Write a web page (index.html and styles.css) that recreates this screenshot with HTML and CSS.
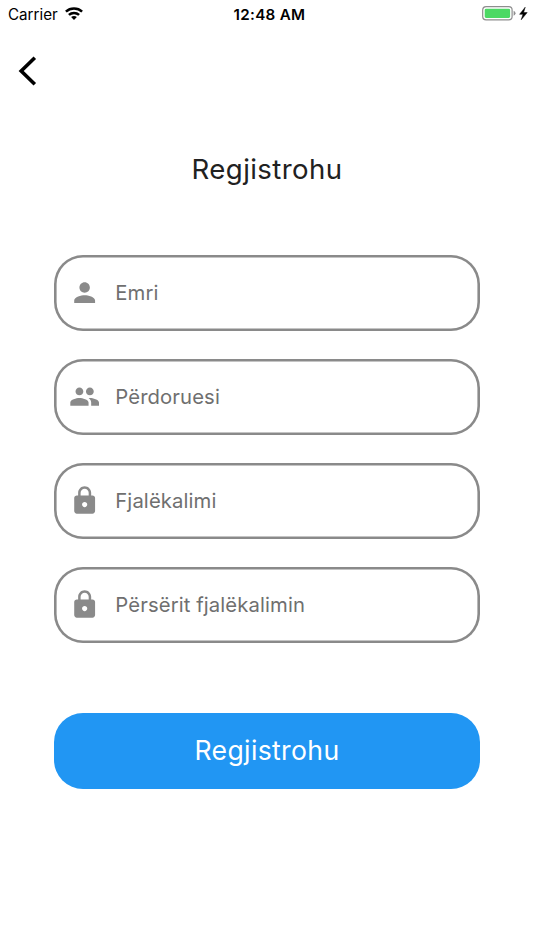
FILE: index.html
```html
<!DOCTYPE html>
<html lang="sq">
<head>
<meta charset="utf-8">
<title>Regjistrohu</title>
<link rel="stylesheet" href="styles.css">
</head>
<body>
<header class="status">
  <div class="carrier"><span class="carrier-name">Carrier</span>
    <svg class="wifi" viewBox="0 0 18 13"><g fill="none" stroke="#000" stroke-width="2.5"><path d="M.9 4.6C5.4.4 12.6.4 17.1 4.6"/><path d="M3.9 7.9C6.8 5.2 11.2 5.2 14.1 7.9"/></g><path d="M6.1 10.1C7.8 8.6 10.2 8.6 11.9 10.1L9 13z"/></svg>
  </div>
  <time class="clock">12:48 AM</time>
  <svg class="battery" viewBox="0 0 48 16"><rect x=".7" y=".7" width="29.4" height="13.2" rx="3.4" fill="#fff" stroke="#8e8e8e" stroke-width="1.2"/><rect x="2.7" y="2.7" width="25.4" height="9.2" rx="1.4" fill="#4cd964"/><path d="M31.6 4.8Q33.500 5.500 33.500 7.300T31.600 9.800z" fill="#8e8e8e"/><path d="M43.2 1.200L37.600 8.300H41L39.200 13.800L45.200 6.600H41.600z" stroke="#000" stroke-width=".5"/></svg>
</header>
<nav class="nav"><button class="back" aria-label="Kthehu"><svg viewBox="0 0 20 30"><path d="M16.8 1.8L3.2 15L16.8 28.2" fill="none" stroke="#000" stroke-width="3.6"/></svg></button></nav>
<main class="page">
  <h1 class="title">Regjistrohu</h1>
  <form class="form">
    <label class="field"><svg class="icon" viewBox="0 0 24 24"><path d="M12 12c2.21 0 4-1.79 4-4s-1.79-4-4-4-4 1.79-4 4 1.79 4 4 4zm0 2c-2.67 0-8 1.34-8 4v2h16v-2c0-2.66-5.33-4-8-4z"/></svg><span class="hint">Emri</span></label>
    <label class="field"><svg class="icon" viewBox="0 0 24 24"><path d="M16 11c1.66 0 2.99-1.34 2.99-3S17.66 5 16 5c-1.66 0-3 1.34-3 3s1.34 3 3 3zm-8 0c1.66 0 2.99-1.34 2.99-3S9.66 5 8 5C6.34 5 5 6.34 5 8s1.34 3 3 3zm0 2c-2.33 0-7 1.17-7 3.5V19h14v-2.5c0-2.33-4.67-3.5-7-3.5zm8 0c-.29 0-.62.02-.97.05 1.16.84 1.97 1.97 1.97 3.45V19h6v-2.5c0-2.33-4.67-3.5-7-3.5z"/></svg><span class="hint">Përdoruesi</span></label>
    <label class="field"><svg class="icon" viewBox="0 0 24 24"><path d="M18 8h-1V6c0-2.76-2.24-5-5-5S7 3.24 7 6v2H6c-1.1 0-2 .9-2 2v10c0 1.1.9 2 2 2h12c1.1 0 2-.9 2-2V10c0-1.1-.9-2-2-2zm-6 9c-1.1 0-2-.9-2-2s.9-2 2-2 2 .9 2 2-.9 2-2 2zm3.1-9H8.9V6c0-1.71 1.39-3.1 3.1-3.1 1.71 0 3.1 1.39 3.1 3.1v2z"/></svg><span class="hint">Fjalëkalimi</span></label>
    <label class="field"><svg class="icon" viewBox="0 0 24 24"><path d="M18 8h-1V6c0-2.76-2.24-5-5-5S7 3.24 7 6v2H6c-1.1 0-2 .9-2 2v10c0 1.1.9 2 2 2h12c1.1 0 2-.9 2-2V10c0-1.1-.9-2-2-2zm-6 9c-1.1 0-2-.9-2-2s.9-2 2-2 2 .9 2 2-.9 2-2 2zm3.1-9H8.9V6c0-1.71 1.39-3.1 3.1-3.1 1.71 0 3.1 1.39 3.1 3.1v2z"/></svg><span class="hint">Përsërit fjalëkalimin</span></label>
    <button class="submit" type="button">Regjistrohu</button>
  </form>
</main>
</body>
</html>
```
FILE: styles.css
```css
* { box-sizing: border-box; }
body { margin: 0; min-height: 950px; background: #fff; font-family: Inter, "Liberation Sans", sans-serif; color: #000; }
.status { display: grid; grid-template-columns: 1fr auto 1fr; align-items: center; height: 28px; padding: 0 4px 0 8px; }
.carrier { display: flex; align-items: center; gap: 7px; font-size: 15.2px; }
.wifi { width: 18px; height: 13px; margin-top: -2px; }
.clock { margin-left: 1px; font-size: 15.2px; font-weight: 600; letter-spacing: .3px; }
.battery { width: 48px; height: 16px; justify-self: end; margin-top: -1px; }
.nav { height: 86px; padding: 28px 18px 0; }
.back { display: block; padding: 0; border: 0; background: none; }
.back svg { display: block; width: 20px; height: 30px; }
.page { padding: 36px 54px 0; }
.title { margin: 0; height: 38px; line-height: 38px; text-align: center; font-size: 27.6px; font-weight: 400; letter-spacing: .4px; color: #212121; }
.form { display: flex; flex-direction: column; gap: 28px; margin-top: 67px; }
.field { display: flex; align-items: center; height: 76px; padding: 0 15px; gap: 15px; border-radius: 29px; box-shadow: inset 0 0 0 2.6px #8a8a8a; }
.icon { flex: none; width: 31.3px; height: 31.3px; fill: #8a8a8a; }
.hint { padding-bottom: 2px; font-size: 20.3px; letter-spacing: .1px; color: #6f6f6f; }
.submit { height: 76px; margin-top: 41.5px; padding: 0 0 2px; border: 0; border-radius: 29px; background: #2196f3; color: #fff; font: 400 26.6px Inter, "Liberation Sans", sans-serif; letter-spacing: .35px; }
```
